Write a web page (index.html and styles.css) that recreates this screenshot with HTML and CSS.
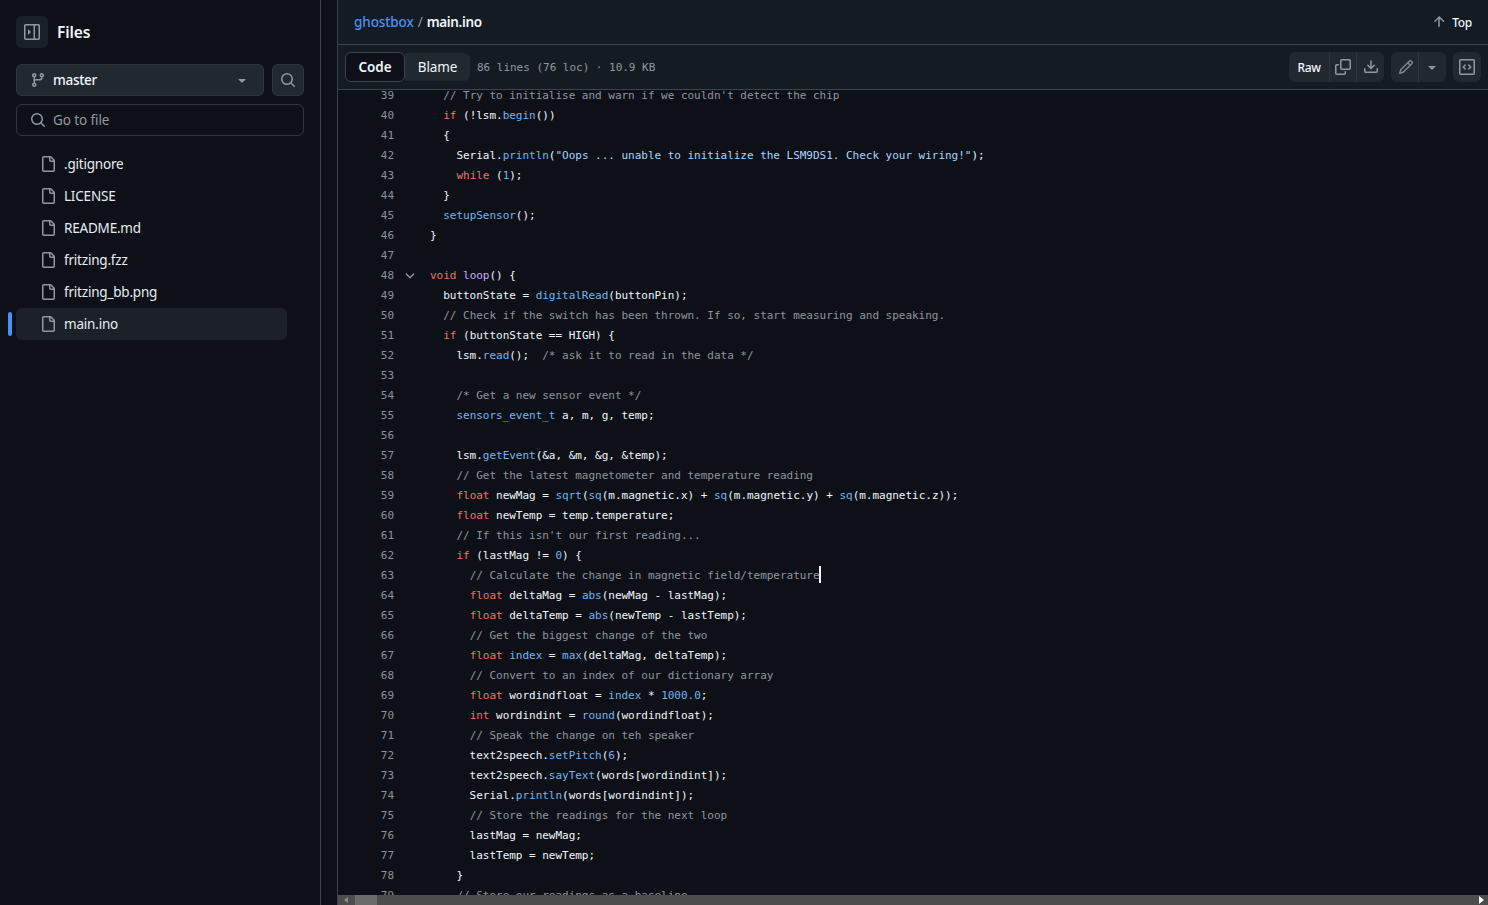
FILE: index.html
```html
<!DOCTYPE html>
<html lang="en">
<head>
<meta charset="utf-8">
<title>ghostbox/main.ino</title>
<link rel="stylesheet" href="styles.css">
</head>
<body>
<svg class="defs" width="0" height="0" aria-hidden="true">
  <symbol id="i-sidebar" viewBox="0 0 16 16"><path d="M6.823 7.823a.25.25 0 0 1 0 .354l-2.396 2.396A.25.25 0 0 1 4 10.396V5.604a.25.25 0 0 1 .427-.177Z"/><path d="M1.75 0h12.5C15.216 0 16 .784 16 1.75v12.5A1.75 1.75 0 0 1 14.25 16H1.75A1.75 1.75 0 0 1 0 14.25V1.75C0 .784.784 0 1.75 0ZM1.5 1.75v12.5c0 .138.112.25.25.25H9.5v-13H1.75a.25.25 0 0 0-.25.25ZM11 14.5h3.25a.25.25 0 0 0 .25-.25V1.75a.25.25 0 0 0-.25-.25H11Z"/></symbol>
  <symbol id="i-branch" viewBox="0 0 16 16"><path d="M9.5 3.25a2.25 2.25 0 1 1 3 2.122V6A2.5 2.5 0 0 1 10 8.5H6a1 1 0 0 0-1 1v1.128a2.251 2.251 0 1 1-1.5 0V5.372a2.25 2.25 0 1 1 1.5 0v1.836A2.493 2.493 0 0 1 6 7h4a1 1 0 0 0 1-1v-.628A2.25 2.25 0 0 1 9.5 3.25Zm-6 0a.75.75 0 1 0 1.5 0 .75.75 0 0 0-1.5 0Zm8.25-.75a.75.75 0 1 0 0 1.5.75.75 0 0 0 0-1.5ZM4.25 12a.75.75 0 1 0 0 1.5.75.75 0 0 0 0-1.5Z"/></symbol>
  <symbol id="i-search" viewBox="0 0 16 16"><path d="M10.68 11.74a6 6 0 0 1-7.922-8.982 6 6 0 0 1 8.982 7.922l3.04 3.04a.749.749 0 0 1-.326 1.275.749.749 0 0 1-.734-.215ZM11.5 7a4.499 4.499 0 1 0-8.997 0A4.499 4.499 0 0 0 11.5 7Z"/></symbol>
  <symbol id="i-file" viewBox="0 0 16 16"><path d="M2 1.75C2 .784 2.784 0 3.75 0h6.586c.464 0 .909.184 1.237.513l2.914 2.914c.329.328.513.773.513 1.237v9.586A1.75 1.75 0 0 1 13.25 16h-9.5A1.75 1.75 0 0 1 2 14.25Zm1.75-.25a.25.25 0 0 0-.25.25v12.5c0 .138.112.25.25.25h9.5a.25.25 0 0 0 .25-.25V6h-2.75A1.75 1.75 0 0 1 9 4.25V1.5Zm6.75.062V4.25c0 .138.112.25.25.25h2.688l-.011-.013-2.914-2.914-.013-.011Z"/></symbol>
  <symbol id="i-up" viewBox="0 0 16 16"><path d="M3.47 7.78a.75.75 0 0 1 0-1.06l4.25-4.25a.75.75 0 0 1 1.06 0l4.25 4.25a.751.751 0 0 1-.018 1.042.751.751 0 0 1-1.042.018L8.75 4.81v7.44a.75.75 0 0 1-1.5 0V4.81L4.53 7.78a.75.75 0 0 1-1.06 0Z"/></symbol>
  <symbol id="i-copy" viewBox="0 0 16 16"><path d="M0 6.75C0 5.784.784 5 1.75 5h1.5a.75.75 0 0 1 0 1.5h-1.5a.25.25 0 0 0-.25.25v7.5c0 .138.112.25.25.25h7.5a.25.25 0 0 0 .25-.25v-1.5a.75.75 0 0 1 1.5 0v1.5A1.75 1.75 0 0 1 9.25 16h-7.5A1.75 1.75 0 0 1 0 14.25Z"/><path d="M5 1.75C5 .784 5.784 0 6.75 0h7.5C15.216 0 16 .784 16 1.75v7.5A1.75 1.75 0 0 1 14.25 11h-7.5A1.75 1.75 0 0 1 5 9.25Zm1.75-.25a.25.25 0 0 0-.25.25v7.5c0 .138.112.25.25.25h7.5a.25.25 0 0 0 .25-.25v-7.5a.25.25 0 0 0-.25-.25Z"/></symbol>
  <symbol id="i-download" viewBox="0 0 16 16"><path d="M2.75 14A1.75 1.75 0 0 1 1 12.25v-2.5a.75.75 0 0 1 1.5 0v2.5c0 .138.112.25.25.25h10.5a.25.25 0 0 0 .25-.25v-2.5a.75.75 0 0 1 1.5 0v2.5A1.75 1.75 0 0 1 13.25 14Z"/><path d="M7.25 7.689V2a.75.75 0 0 1 1.5 0v5.689l1.97-1.969a.749.749 0 1 1 1.06 1.06l-3.25 3.25a.749.749 0 0 1-1.06 0L4.22 6.78a.749.749 0 1 1 1.06-1.06l1.97 1.969Z"/></symbol>
  <symbol id="i-pencil" viewBox="0 0 16 16"><path d="M11.013 1.427a1.75 1.75 0 0 1 2.474 0l1.086 1.086a1.75 1.75 0 0 1 0 2.474l-8.61 8.61c-.21.21-.47.364-.756.445l-3.251.93a.75.75 0 0 1-.927-.928l.929-3.25c.081-.286.235-.547.445-.758l8.61-8.61Zm.176 4.823L9.75 4.81l-6.286 6.287a.253.253 0 0 0-.064.108l-.558 1.953 1.953-.558a.253.253 0 0 0 .108-.064Zm1.238-3.763a.25.25 0 0 0-.354 0L10.811 3.75l1.439 1.44 1.263-1.263a.25.25 0 0 0 0-.354Z"/></symbol>
  <symbol id="i-code" viewBox="0 0 16 16"><path d="M0 1.75C0 .784.784 0 1.75 0h12.5C15.216 0 16 .784 16 1.75v12.5A1.75 1.75 0 0 1 14.25 16H1.75A1.75 1.75 0 0 1 0 14.25Zm1.75-.25a.25.25 0 0 0-.25.25v12.5c0 .138.112.25.25.25h12.5a.25.25 0 0 0 .25-.25V1.75a.25.25 0 0 0-.25-.25Zm7.47 3.97a.75.75 0 0 1 1.06 0l2 2a.75.75 0 0 1 0 1.06l-2 2a.749.749 0 0 1-1.275-.326.749.749 0 0 1 .215-.734L10.69 8 9.22 6.53a.75.75 0 0 1 0-1.06ZM6.78 6.53 5.31 8l1.47 1.47a.749.749 0 0 1-.326 1.275.749.749 0 0 1-.734-.215l-2-2a.75.75 0 0 1 0-1.06l2-2a.751.751 0 0 1 1.042.018.751.751 0 0 1 .018 1.042Z"/></symbol>
  <symbol id="i-chev" viewBox="0 0 16 16"><path d="M12.78 5.22a.749.749 0 0 1 0 1.06l-4.25 4.25a.749.749 0 0 1-1.06 0L3.22 6.28a.749.749 0 1 1 1.06-1.06L8 8.939l3.72-3.719a.749.749 0 0 1 1.06 0Z"/></symbol>
  <symbol id="i-caret" viewBox="0 0 16 16"><path d="m4.427 7.427 3.396 3.396a.25.25 0 0 0 .354 0l3.396-3.396A.25.25 0 0 0 11.396 7H4.604a.25.25 0 0 0-.177.427Z"/></symbol>
</svg>

<div class="app">
  <aside class="sidebar">
    <div class="side-head">
      <button class="icon-btn toggle"><svg class="ico"><use href="#i-sidebar"/></svg></button>
      <span class="side-title">Files</span>
    </div>
    <div class="branch-row">
      <button class="branch-btn">
        <svg class="ico"><use href="#i-branch"/></svg>
        <span class="branch-name">master</span>
        <svg class="ico caret"><use href="#i-caret"/></svg>
      </button>
      <button class="icon-btn bordered"><svg class="ico"><use href="#i-search"/></svg></button>
    </div>
    <div class="go-file">
      <svg class="ico"><use href="#i-search"/></svg>
      <span>Go to file</span>
    </div>
    <ul class="tree">
      <li class="tree-item"><svg class="ico"><use href="#i-file"/></svg><span>.gitignore</span></li>
      <li class="tree-item"><svg class="ico"><use href="#i-file"/></svg><span>LICENSE</span></li>
      <li class="tree-item"><svg class="ico"><use href="#i-file"/></svg><span>README.md</span></li>
      <li class="tree-item"><svg class="ico"><use href="#i-file"/></svg><span>fritzing.fzz</span></li>
      <li class="tree-item"><svg class="ico"><use href="#i-file"/></svg><span>fritzing_bb.png</span></li>
      <li class="tree-item current"><svg class="ico"><use href="#i-file"/></svg><span>main.ino</span></li>
    </ul>
  </aside>
  <div class="gutter"></div>
  <main class="main">
    <header class="crumbs">
      <div class="path"><a class="repo">ghostbox</a><span class="sep">/</span><strong>main.ino</strong></div>
      <div class="top"><svg class="ico"><use href="#i-up"/></svg><span>Top</span></div>
    </header>
    <div class="toolbar">
      <div class="tabs"><span class="tab active">Code</span><span class="tab blame">Blame</span></div>
      <span class="meta">86 lines (76 loc) · 10.9 KB</span>
      <div class="actions">
        <div class="group">
          <span class="g-btn raw">Raw</span>
          <span class="g-btn copy"><svg class="ico"><use href="#i-copy"/></svg></span>
          <span class="g-btn dl"><svg class="ico"><use href="#i-download"/></svg></span>
        </div>
        <div class="group">
          <span class="g-btn edit"><svg class="ico"><use href="#i-pencil"/></svg></span>
          <span class="g-btn more"><svg class="ico"><use href="#i-caret"/></svg></span>
        </div>
        <div class="group">
          <span class="g-btn sym"><svg class="ico"><use href="#i-code"/></svg></span>
        </div>
      </div>
    </div>
    <div class="code-view">
      <div class="lines">
<div class="row"><span class="num">39</span><span class="fold"></span><code>  <i class="c">// Try to initialise and warn if we couldn't detect the chip</i></code></div>
<div class="row"><span class="num">40</span><span class="fold"></span><code>  <i class="k">if</i> (!lsm.<i class="f">begin</i>())</code></div>
<div class="row"><span class="num">41</span><span class="fold"></span><code>  {</code></div>
<div class="row"><span class="num">42</span><span class="fold"></span><code>    Serial.<i class="f">println</i>(<i class="s">"Oops ... unable to initialize the LSM9DS1. Check your wiring!"</i>);</code></div>
<div class="row"><span class="num">43</span><span class="fold"></span><code>    <i class="k">while</i> (<i class="f">1</i>);</code></div>
<div class="row"><span class="num">44</span><span class="fold"></span><code>  }</code></div>
<div class="row"><span class="num">45</span><span class="fold"></span><code>  <i class="f">setupSensor</i>();</code></div>
<div class="row"><span class="num">46</span><span class="fold"></span><code>}</code></div>
<div class="row"><span class="num">47</span><span class="fold"></span><code></code></div>
<div class="row"><span class="num">48</span><span class="fold"><svg class="ico"><use href="#i-chev"/></svg></span><code><i class="k">void</i> <i class="p">loop</i>() {</code></div>
<div class="row"><span class="num">49</span><span class="fold"></span><code>  buttonState = <i class="f">digitalRead</i>(buttonPin);</code></div>
<div class="row"><span class="num">50</span><span class="fold"></span><code>  <i class="c">// Check if the switch has been thrown. If so, start measuring and speaking.</i></code></div>
<div class="row"><span class="num">51</span><span class="fold"></span><code>  <i class="k">if</i> (buttonState == HIGH) {</code></div>
<div class="row"><span class="num">52</span><span class="fold"></span><code>    lsm.<i class="f">read</i>();  <i class="c">/* ask it to read in the data */</i></code></div>
<div class="row"><span class="num">53</span><span class="fold"></span><code></code></div>
<div class="row"><span class="num">54</span><span class="fold"></span><code>    <i class="c">/* Get a new sensor event */</i></code></div>
<div class="row"><span class="num">55</span><span class="fold"></span><code>    <i class="f">sensors_event_t</i> a, m, g, temp;</code></div>
<div class="row"><span class="num">56</span><span class="fold"></span><code></code></div>
<div class="row"><span class="num">57</span><span class="fold"></span><code>    lsm.<i class="f">getEvent</i>(&amp;a, &amp;m, &amp;g, &amp;temp);</code></div>
<div class="row"><span class="num">58</span><span class="fold"></span><code>    <i class="c">// Get the latest magnetometer and temperature reading</i></code></div>
<div class="row"><span class="num">59</span><span class="fold"></span><code>    <i class="k">float</i> newMag = <i class="f">sqrt</i>(<i class="f">sq</i>(m.magnetic.x) + <i class="f">sq</i>(m.magnetic.y) + <i class="f">sq</i>(m.magnetic.z));</code></div>
<div class="row"><span class="num">60</span><span class="fold"></span><code>    <i class="k">float</i> newTemp = temp.temperature;</code></div>
<div class="row"><span class="num">61</span><span class="fold"></span><code>    <i class="c">// If this isn't our first reading...</i></code></div>
<div class="row"><span class="num">62</span><span class="fold"></span><code>    <i class="k">if</i> (lastMag != <i class="f">0</i>) {</code></div>
<div class="row"><span class="num">63</span><span class="fold"></span><code>      <i class="c">// Calculate the change in magnetic field/temperature</i><b class="cursor"></b></code></div>
<div class="row"><span class="num">64</span><span class="fold"></span><code>      <i class="k">float</i> deltaMag = <i class="f">abs</i>(newMag - lastMag);</code></div>
<div class="row"><span class="num">65</span><span class="fold"></span><code>      <i class="k">float</i> deltaTemp = <i class="f">abs</i>(newTemp - lastTemp);</code></div>
<div class="row"><span class="num">66</span><span class="fold"></span><code>      <i class="c">// Get the biggest change of the two</i></code></div>
<div class="row"><span class="num">67</span><span class="fold"></span><code>      <i class="k">float</i> <i class="f">index</i> = <i class="f">max</i>(deltaMag, deltaTemp);</code></div>
<div class="row"><span class="num">68</span><span class="fold"></span><code>      <i class="c">// Convert to an index of our dictionary array</i></code></div>
<div class="row"><span class="num">69</span><span class="fold"></span><code>      <i class="k">float</i> wordindfloat = <i class="f">index</i> * <i class="f">1000.0</i>;</code></div>
<div class="row"><span class="num">70</span><span class="fold"></span><code>      <i class="k">int</i> wordindint = <i class="f">round</i>(wordindfloat);</code></div>
<div class="row"><span class="num">71</span><span class="fold"></span><code>      <i class="c">// Speak the change on teh speaker</i></code></div>
<div class="row"><span class="num">72</span><span class="fold"></span><code>      text2speech.<i class="f">setPitch</i>(<i class="f">6</i>);</code></div>
<div class="row"><span class="num">73</span><span class="fold"></span><code>      text2speech.<i class="f">sayText</i>(words[wordindint]);</code></div>
<div class="row"><span class="num">74</span><span class="fold"></span><code>      Serial.<i class="f">println</i>(words[wordindint]);</code></div>
<div class="row"><span class="num">75</span><span class="fold"></span><code>      <i class="c">// Store the readings for the next loop</i></code></div>
<div class="row"><span class="num">76</span><span class="fold"></span><code>      lastMag = newMag;</code></div>
<div class="row"><span class="num">77</span><span class="fold"></span><code>      lastTemp = newTemp;</code></div>
<div class="row"><span class="num">78</span><span class="fold"></span><code>    }</code></div>
<div class="row"><span class="num">79</span><span class="fold"></span><code>    <i class="c">// Store our readings as a baseline</i></code></div>
      </div>
    </div>
    <div class="hscroll">
      <span class="arrow left"></span>
      <span class="thumb"></span>
      <span class="arrow right"></span>
    </div>
  </main>
</div>
</body>
</html>
```
FILE: styles.css
```css
* { box-sizing: border-box; }
html, body { margin: 0; height: 100%; overflow: hidden; }
body {
  background: #0d1117;
  color: #f0f6fc;
  font-family: "Noto Sans", "Liberation Sans", sans-serif;
  font-size: 13.5px;
  letter-spacing: -0.1px;
}
.defs { position: absolute; }
.ico { width: 16px; height: 16px; fill: currentColor; flex: none; display: block; }
button { font: inherit; letter-spacing: inherit; color: inherit; padding: 0; cursor: pointer; }

.app { display: flex; height: 905px; }

.sidebar {
  width: 321px;
  flex: none;
  border-right: 1px solid #3d444d;
  padding: 16px 16px 0;
  display: flex;
  flex-direction: column;
}
.side-head { display: flex; align-items: center; gap: 9px; height: 32px; }
.side-title { font-size: 15.5px; font-weight: 600; }
.icon-btn {
  width: 32px; height: 32px; flex: none;
  display: flex; align-items: center; justify-content: center;
  background: #212830;
  border: 0;
  border-radius: 6px;
  color: #9198a1;
}
.icon-btn.toggle { background: #1a2029; }
.icon-btn.bordered { border: 1px solid #2f353d; }
.branch-row { display: flex; gap: 8px; margin-top: 16px; }
.branch-btn {
  flex: 1;
  height: 32px;
  display: flex; align-items: center;
  padding: 0 13px;
  gap: 7px;
  background: #212830;
  border: 1px solid #2f353d;
  border-radius: 6px;
  color: #9198a1;
  text-align: left;
}
.branch-name { flex: 1; color: #f0f6fc; font-weight: 500; letter-spacing: -0.3px; }
.caret { width: 16px; height: 16px; }
.go-file {
  height: 32px;
  margin-top: 8px;
  display: flex; align-items: center; gap: 7px;
  padding: 0 13px;
  border: 1px solid #30363d;
  border-radius: 6px;
  color: #9198a1;
}
.tree { list-style: none; margin: 12px 17px 0 0; padding: 0; letter-spacing: -0.2px; }
.tree-item {
  position: relative;
  height: 32px;
  display: flex; align-items: center; gap: 8px;
  padding-left: 24px;
  border-radius: 6px;
  color: #e6edf3;
}
.tree-item .ico { color: #9198a1; }
.tree-item.current { background: #1c2128; }
.tree-item.current::before {
  content: "";
  position: absolute;
  left: -8px; top: 4px;
  width: 4px; height: 24px;
  border-radius: 2px;
  background: #4493f8;
}

.gutter { width: 17px; flex: none; border-right: 1px solid #3d444d; }

.main { flex: 1; min-width: 0; display: flex; flex-direction: column; }

.crumbs {
  height: 45px;
  flex: none;
  display: flex; align-items: center; justify-content: space-between;
  padding: 0 16px;
  background: #151b23;
  border-bottom: 1px solid #3d444d;
}
.path { display: flex; align-items: center; gap: 4px; }
.repo { color: #4493f8; font-weight: 500; }
.sep { color: #9198a1; }
.path strong { font-weight: 600; letter-spacing: -0.35px; }
.top { display: flex; align-items: center; gap: 5px; font-size: 12px; font-weight: 500; letter-spacing: -0.3px; }
.top .ico { color: #9198a1; }

.toolbar {
  height: 45px;
  flex: none;
  display: flex; align-items: center;
  padding: 0 7px;
  background: #151b23;
  border-bottom: 1px solid #3d444d;
}
.tabs { display: flex; align-items: center; }
.tab {
  display: flex; align-items: center; justify-content: center;
  height: 28px;
}
.tab.active {
  width: 60px; height: 30px;
  background: #0d1117;
  border: 1px solid #3d444d;
  border-radius: 6px;
  font-weight: 600;
  position: relative;
}
.tab.blame {
  width: 65px;
  background: #212830;
  border-radius: 0 6px 6px 0;
  color: #f0f6fc;
}
.meta {
  margin-left: 7px;
  font-family: "DejaVu Sans Mono", monospace;
  font-size: 11px;
  letter-spacing: -0.02px;
  color: #9198a1;
}
.actions { margin-left: auto; display: flex; gap: 7px; }
.group {
  display: flex; height: 30px;
  background: #212830;
  border-radius: 6px;
}
.g-btn {
  display: flex; align-items: center; justify-content: center;
  color: #9198a1;
  border-left: 1px solid #2f353d;
}
.g-btn:first-child { border-left: 0; }
.g-btn.raw { width: 40px; color: #f0f6fc; font-size: 12px; font-weight: 500; letter-spacing: -0.3px; }
.g-btn.copy { width: 27px; }
.g-btn.dl { width: 28px; }
.g-btn.edit { width: 27px; padding-left: 3px; color: #7d8590; }
.g-btn.more { width: 28px; padding-right: 1px; }
.g-btn.sym { width: 28px; }

.code-view {
  flex: 1;
  min-height: 0;
  overflow: hidden;
  background: #0d1117;
}
.lines { margin-top: -4px; }
.row {
  display: grid;
  grid-template-columns: 56px 36px 1fr;
  height: 20px;
  line-height: 20px;
  font-family: "DejaVu Sans Mono", monospace;
  font-size: 11px;
  letter-spacing: -0.02px;
}
.num { text-align: right; color: #8b929b; }
.fold { display: flex; align-items: center; padding-left: 9px; color: #9198a1; }
.fold .ico { width: 14px; height: 14px; }
code { font: inherit; white-space: pre; color: #f0f6fc; position: relative; }
code i { font-style: normal; }
.c { color: #8f959e; }
.k { color: #ec736b; }
.f { color: #72b4ee; }
.s { color: #a5d6ff; }
.p { color: #d2a8ff; }
.cursor {
  display: inline-block;
  width: 2px; height: 17px;
  margin-left: -1px;
  vertical-align: -4px;
  background: #f0f6fc;
}

.hscroll {
  height: 10px;
  flex: none;
  display: flex; align-items: center;
  background: #4d4d4d;
}
.thumb { width: 22px; height: 10px; margin-left: 7px; background: #6b6b6b; }
.arrow { width: 0; height: 0; border-style: solid; border-color: transparent; }
.arrow.left { margin-left: 6px; border-width: 3px 4px 3px 0; border-right-color: #8a8a8a; }
.arrow.right { margin-left: auto; margin-right: 4px; border-width: 4px 0 4px 5px; border-left-color: #ffffff; }
```
